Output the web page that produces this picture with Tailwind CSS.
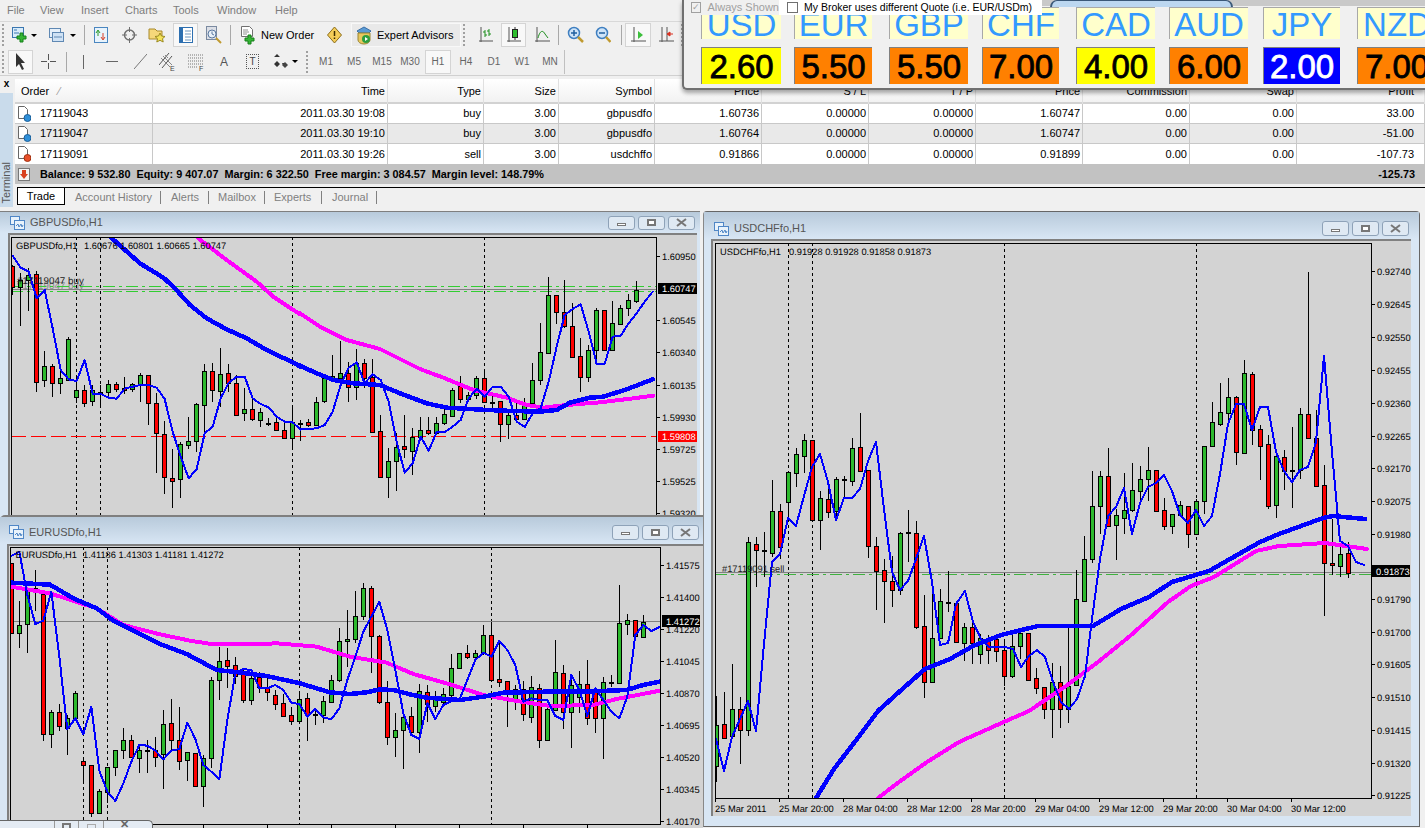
<!DOCTYPE html>
<html lang="en">

<head>
  <meta charset="UTF-8">
  <title>MetaTrader 4</title>
  <script src="https://cdn.jsdelivr.net/npm/@tailwindcss/browser@4"></script>
</head>

<body class="relative w-[1425px] h-[828px] overflow-hidden bg-[#f0f0f0] font-['Liberation_Sans',sans-serif] text-[11px] text-black">

  <!-- Menu -->
  <div class="flex items-center h-[21px] text-[#7d7d7d] text-[11px]">
    <span class="ml-[7px] w-[33px]">File</span>
    <span class="w-[41px]">View</span>
    <span class="w-[44px]">Insert</span>
    <span class="w-[48px]">Charts</span>
    <span class="w-[44px]">Tools</span>
    <span class="w-[58px]">Window</span>
    <span>Help</span>
  </div>

  <!-- Toolbar 1 -->
  <div class="flex items-center h-[27px] border-t border-[#d8d8d8]">
    <div class="ml-[2px] w-[2px] h-[22px] border-l-2 border-dotted border-[#a0a0a0]"></div>
    <svg class="ml-[7px] shrink-0" width="16" height="18" viewBox="0 0 16 18"><rect x="1.500" y="1.500" width="11" height="10" fill="#d8ecfa" stroke="#3a76b0"/><path d="M3 4h3M3 7h5" stroke="#3a76b0"/><path d="M9 7h3v3h3v3h-3v3H9v-3H6v-3h3z" fill="#35b535" stroke="#17801a"/></svg>
    <div class="ml-[4px] w-0 h-0 border-x-[3px] border-x-transparent border-t-[3px] border-t-black"></div>
    <svg class="ml-[11px] shrink-0" width="17" height="18" viewBox="0 0 17 18"><rect x="1.500" y="2.500" width="11" height="9" fill="#e6f0fa" stroke="#5f88b3"/><rect x="4.500" y="6.500" width="11" height="9" fill="#cfe2f5" stroke="#5f88b3"/><path d="M6 11h8" stroke="#5f88b3"/></svg>
    <div class="ml-[5px] w-0 h-0 border-x-[3px] border-x-transparent border-t-[3px] border-t-black"></div>
    <div class="ml-[8px] w-px h-[20px] bg-[#a8a8a8]"></div>
    <svg class="ml-[8px] shrink-0" width="16" height="18" viewBox="0 0 16 18"><rect x="1.500" y="1.500" width="13" height="15" fill="#e8f3fc" stroke="#4a86c0"/><path d="M5 10V5M3 7l2-3 2 3" stroke="#2a9a2a" fill="none"/><path d="M10 7v6M8 11l2 3 2-3" stroke="#d8402a" fill="none"/></svg>
    <svg class="ml-[13px] shrink-0" width="15" height="18" viewBox="0 0 15 18"><circle cx="7.500" cy="9" r="5" fill="none" stroke="#6f6f6f" stroke-width="1.500"/><path d="M7.500 1v5M7.500 12v5M0 9h5M10 9h5" stroke="#6f6f6f"/></svg>
    <svg class="ml-[11px] shrink-0" width="18" height="18" viewBox="0 0 18 18"><path d="M1 3h6l2 2h5v8H1z" fill="#f5d77a" stroke="#a88a2c"/><path d="M12 7l1.500 3 3.500.5-2.500 2.200.7 3.300-3.200-1.700-3.200 1.700.7-3.300L7 10.500l3.500-.5z" fill="#f4e25a" stroke="#9a8a20"/></svg>
    <div class="ml-[7px] flex justify-center items-center w-[25px] h-[24px] bg-[#f8f8f8] border border-[#d4d4d4]">
      <svg width="16" height="18" viewBox="0 0 16 18"><rect x="1.500" y="1.500" width="13" height="15" fill="#fff" stroke="#2d6fb0"/><rect x="2" y="2" width="3" height="14" fill="#2d6fb0"/><path d="M7 5h6M7 8h6M7 11h6M7 14h6" stroke="#6f97bf"/></svg>
    </div>
    <svg class="ml-[7px] shrink-0" width="18" height="20" viewBox="0 0 18 20"><rect x="1.500" y="1.500" width="10" height="13" fill="#dcdfe6" stroke="#7b8aa0"/><circle cx="7" cy="9" r="4" fill="#e8f0f8" stroke="#5a78a0"/><path d="M7 6.500V9l2 1" stroke="#5a78a0" fill="none"/><path d="M11 13l5 5" stroke="#c09a30" stroke-width="2"/></svg>
    <div class="ml-[7px] w-px h-[20px] bg-[#a8a8a8]"></div>
    <svg class="ml-[9px] shrink-0" width="16" height="20" viewBox="0 0 16 20"><path d="M1.500 1.500h8l3 3v7h-11z" fill="#fff" stroke="#707070"/><path d="M3 5h5M3 7h6M3 9h4" stroke="#909090"/><path d="M8 10h3v3h3v3h-3v3H8v-3H5v-3h3z" fill="#35b535" stroke="#17801a"/></svg>
    <span class="ml-[5px] w-[56px] text-[11px]">New Order</span>
    <svg class="ml-[10px] shrink-0" width="15" height="18" viewBox="0 0 15 18"><path d="M7.500 1l7 8-7 8-7-8z" fill="#f5cd58" stroke="#8a6d1c"/><path d="M7.500 5v5M7.500 11.500v1.500" stroke="#3c2c00" stroke-width="1.500"/></svg>
    <div class="ml-[9px] flex items-center w-[110px] h-[24px] bg-[#e9e9e9] border border-[#f8f8f8]">
      <svg class="ml-[3px] shrink-0" width="18" height="20" viewBox="0 0 18 20"><path d="M2 6l7-4 7 4-2 2H4z" fill="#5b9bd5" stroke="#3a6ea5"/><path d="M3 8h12v7a6 4 0 0 1-12 0z" fill="#e8c860" stroke="#9a8430"/><circle cx="11" cy="14" r="4" fill="#2e9e3e"/><path d="M10 12l3 2-3 2z" fill="#fff"/></svg>
      <span class="ml-[4px] text-[11px] whitespace-nowrap">Expert Advisors</span>
    </div>
    <div class="ml-[2px] w-[2px] h-[22px] border-l-2 border-dotted border-[#a0a0a0]"></div>
    <svg class="ml-[14px] shrink-0" width="14" height="18" viewBox="0 0 14 18"><path d="M2 1v15M0 15h14" stroke="#555" fill="none"/><path d="M6 4v7M4 6h2M6 9h2M10 3v7M8 5h2M10 8h2" stroke="#1f8f1f" fill="none"/></svg>
    <div class="ml-[8px] flex justify-center items-center w-[25px] h-[24px] bg-[#f8f8f8] border border-[#d4d4d4]">
      <svg width="14" height="18" viewBox="0 0 14 18"><path d="M2 1v15M0 15h14" stroke="#555" fill="none"/><path d="M8 1v13" stroke="#333"/><rect x="5.500" y="3.500" width="5" height="8" fill="#2fbf2f" stroke="#222"/></svg>
    </div>
    <svg class="ml-[9px] shrink-0" width="15" height="18" viewBox="0 0 15 18"><path d="M2 1v15M0 15h15" stroke="#555" fill="none"/><path d="M3 12c2-8 5-8 7-4l3 4" stroke="#1f8f1f" fill="none"/></svg>
    <div class="ml-[8px] w-px h-[20px] bg-[#a8a8a8]"></div>
    <svg class="ml-[8px] shrink-0" width="17" height="18" viewBox="0 0 17 18"><circle cx="7" cy="7" r="5.500" fill="#cfe4f8" stroke="#3f7fc0" stroke-width="1.500"/><path d="M4 7h6M7 4v6" stroke="#1f5f9f" stroke-width="1.500"/><path d="M11 11l5 5" stroke="#c09a30" stroke-width="2.500"/></svg>
    <svg class="ml-[11px] shrink-0" width="16" height="18" viewBox="0 0 16 18"><circle cx="7" cy="7" r="5.500" fill="#cfe4f8" stroke="#3f7fc0" stroke-width="1.500"/><path d="M4 7h6" stroke="#1f5f9f" stroke-width="1.500"/><path d="M11 11l4.500 5" stroke="#c09a30" stroke-width="2.500"/></svg>
    <div class="ml-[10px] w-px h-[20px] bg-[#a8a8a8]"></div>
    <div class="ml-[3px] flex justify-center items-center w-[26px] h-[24px] bg-[#f8f8f8] border border-[#d4d4d4]">
      <svg width="15" height="18" viewBox="0 0 15 18"><path d="M3 1v15M0 15h15" stroke="#555" fill="none"/><path d="M7 5l5 4-5 4z" fill="#3cbf3c"/></svg>
    </div>
    <svg class="ml-[8px] shrink-0" width="15" height="18" viewBox="0 0 15 18"><path d="M3 1v15M0 15h15M8 1v14" stroke="#555" fill="none"/><path d="M14 8l-5 0M11 6l-3 2 3 2z" fill="#d83020" stroke="#d83020"/></svg>
    <div class="ml-[7px] w-[2px] h-[22px] border-l-2 border-dotted border-[#a0a0a0]"></div>
  </div>

  <!-- Toolbar 2 -->
  <div class="flex items-center h-[28px] border-b border-[#d0d0d0]">
    <div class="ml-[2px] w-[2px] h-[22px] border-l-2 border-dotted border-[#a0a0a0]"></div>
    <div class="ml-[4px] flex justify-center items-center w-[25px] h-[24px] bg-[#f8f8f8] border border-[#d4d4d4]">
      <svg width="11" height="17" viewBox="0 0 11 17"><path d="M1 0v14l3-3 3 6 2-1-3-6h4z" fill="#333"/></svg>
    </div>
    <svg class="ml-[8px] shrink-0" width="15" height="15" viewBox="0 0 15 15"><path d="M7.500 0v6M7.500 9v6M0 7.500h6M9 7.500h6" stroke="#555"/></svg>
    <div class="ml-[10px] w-px h-[20px] bg-[#a8a8a8]"></div>
    <div class="ml-[16px] w-px h-[14px] bg-[#666]"></div>
    <div class="ml-[22px] w-[12px] h-px bg-[#666]"></div>
    <svg class="ml-[16px] shrink-0" width="13" height="15" viewBox="0 0 13 15"><path d="M0 15L13 0" stroke="#777"/></svg>
    <svg class="ml-[12px] shrink-0" width="17" height="20" viewBox="0 0 17 20"><path d="M0 13L10 1M3 16L13 4" stroke="#555"/><path d="M2 6l9 9M4 4l9 9M6 3l3 3" stroke="#888"/><text x="11" y="19" font-size="7" fill="#444">E</text></svg>
    <svg class="ml-[12px] shrink-0" width="16" height="20" viewBox="0 0 16 20"><path d="M0 3h15M0 6h15M0 9h15M0 12h15M0 15h10" stroke="#777" stroke-dasharray="1 1"/><text x="11" y="19" font-size="7" fill="#444">F</text></svg>
    <span class="ml-[16px] w-[8px] text-[12px] text-[#555]">A</span>
    <div class="ml-[18px] flex justify-center items-center w-[13px] h-[15px] border border-dotted border-[#555] text-[10px] text-[#444]">T</div>
    <svg class="ml-[14px] shrink-0" width="16" height="18" viewBox="0 0 16 18"><path d="M1 4l3-3 3 3zM9 10l3-0 -1.500 3zM4 8l3 3-3 3-3-3z" fill="#333"/><path d="M9 12l3 3 3-3-3-3z" fill="#444"/></svg>
    <div class="ml-[3px] w-0 h-0 border-x-[3px] border-x-transparent border-t-[3px] border-t-black"></div>
    <div class="ml-[8px] w-[2px] h-[22px] border-l-2 border-dotted border-[#a0a0a0]"></div>
    <div class="ml-[4px] flex items-center text-[10px] text-[#666] text-center">
      <span class="w-[28px]">M1</span>
      <span class="w-[28px]">M5</span>
      <span class="w-[28px]">M15</span>
      <span class="w-[28px]">M30</span>
      <span class="flex justify-center items-center w-[26px] h-[24px] mx-px bg-[#f8f8f8] border border-[#d4d4d4]">H1</span>
      <span class="w-[28px]">H4</span>
      <span class="w-[28px]">D1</span>
      <span class="w-[28px]">W1</span>
      <span class="w-[28px]">MN</span>
    </div>
    <div class="w-px h-[24px] bg-[#c0c0c0]"></div>
  </div>

  <!-- Terminal -->
  <div class="flex h-[131px] pt-[3px]">
    <div class="relative w-[13px] shrink-0 bg-[#c9dbeb]">
      <div class="absolute left-0 top-[-3px] w-[13px] h-[17px] bg-[#f0f0f0] text-center font-bold text-[10px]">x</div>
      <div class="absolute left-0 bottom-[3px] w-[13px] flex justify-center">
        <span class="[writing-mode:vertical-rl] rotate-180 text-[11px] text-[#555]">Terminal</span>
      </div>
    </div>
    <div class="flex-1 ml-[2px]">
      <div class="grid grid-cols-[138px_235px_96px_75px_96px_107px_107px_107px_107px_107px_107px_128px] h-[25px] bg-linear-to-b from-white to-[#f2f2f2] border-b-2 border-[#d2d2d2] items-center text-right [&>span]:h-full [&>span]:leading-[25px] [&>span]:pr-[2px] [&>span]:border-r [&>span]:border-[#e0e0e0]">
        <span class="!text-left pl-[6px]">Order &nbsp; <span class="text-[#999]">⁄</span></span>
        <span>Time</span><span>Type</span><span>Size</span><span>Symbol</span><span>Price</span><span>S / L</span><span>T / P</span><span>Price</span><span>Commission</span><span>Swap</span><span class="!pr-[10px]">Profit</span>
      </div>
      <div class="grid grid-cols-[138px_235px_96px_75px_96px_107px_107px_107px_107px_107px_107px_128px] h-[20px] bg-white border-b border-[#c8c8c8] items-center text-right [&>span]:h-full [&>span]:leading-[19px] [&>span]:pr-[2px] [&>span]:border-r [&>span]:border-[#c8c8c8]">
        <span class="!flex items-center !text-left pl-[3px]"><svg class="mr-[9px]" width="13" height="16" viewBox="0 0 13 16"><path d="M.5.500h6l3 3v9h-9z" fill="#fff" stroke="#666"/><circle cx="9.500" cy="12" r="3.500" fill="#2f8fd8" stroke="#1a5f9a"/></svg>17119043</span>
        <span>2011.03.30 19:08</span><span>buy</span><span>3.00</span><span>gbpusdfo</span><span>1.60736</span><span>0.00000</span><span>0.00000</span><span>1.60747</span><span>0.00</span><span>0.00</span><span class="!pr-[10px]">33.00</span>
      </div>
      <div class="grid grid-cols-[138px_235px_96px_75px_96px_107px_107px_107px_107px_107px_107px_128px] h-[20px] bg-[#e9e9e9] border-b border-[#c8c8c8] items-center text-right [&>span]:h-full [&>span]:leading-[19px] [&>span]:pr-[2px] [&>span]:border-r [&>span]:border-[#c8c8c8]">
        <span class="!flex items-center !text-left pl-[3px]"><svg class="mr-[9px]" width="13" height="16" viewBox="0 0 13 16"><path d="M.5.500h6l3 3v9h-9z" fill="#fff" stroke="#666"/><circle cx="9.500" cy="12" r="3.500" fill="#2f8fd8" stroke="#1a5f9a"/></svg>17119047</span>
        <span>2011.03.30 19:10</span><span>buy</span><span>3.00</span><span>gbpusdfo</span><span>1.60764</span><span>0.00000</span><span>0.00000</span><span>1.60747</span><span>0.00</span><span>0.00</span><span class="!pr-[10px]">-51.00</span>
      </div>
      <div class="grid grid-cols-[138px_235px_96px_75px_96px_107px_107px_107px_107px_107px_107px_128px] h-[20px] bg-white items-center text-right [&>span]:h-full [&>span]:leading-[20px] [&>span]:pr-[2px] [&>span]:border-r [&>span]:border-[#c8c8c8]">
        <span class="!flex items-center !text-left pl-[3px]"><svg class="mr-[9px]" width="13" height="16" viewBox="0 0 13 16"><path d="M.5.500h6l3 3v9h-9z" fill="#fff" stroke="#666"/><circle cx="9.500" cy="12" r="3.500" fill="#e8502a" stroke="#a03010"/></svg>17119091</span>
        <span>2011.03.30 19:26</span><span>sell</span><span>3.00</span><span>usdchffo</span><span>0.91866</span><span>0.00000</span><span>0.00000</span><span>0.91899</span><span>0.00</span><span>0.00</span><span class="!pr-[10px]">-107.73</span>
      </div>
      <div class="flex items-center h-[20px] bg-[#c2c2c2] font-bold text-[10.85px]">
        <div class="ml-[3px] flex justify-center items-center w-[12px] h-[13px] bg-[#f4f4f4] border border-[#777]">
          <svg width="8" height="9" viewBox="0 0 8 9"><path d="M2 0h4v4h2L4 9 0 4h2z" fill="#d8401f"/></svg>
        </div>
        <span class="ml-[10px] whitespace-pre">Balance: 9 532.80  Equity: 9 407.07  Margin: 6 322.50  Free margin: 3 084.57  Margin level: 148.79%</span>
        <span class="ml-auto mr-[10px]">-125.73</span>
      </div>
      <!-- Tabs -->
      <div class="flex h-[22px] text-[11px] text-[#808080]">
        <div class="ml-[2px] mt-[3px] flex justify-center items-center w-[48px] h-[18px] bg-white border border-black text-black shrink-0">Trade</div>
        <div class="flex-1 flex items-center mt-[3px] h-[19px] border-t border-black pt-[1px]">
          <span class="ml-[10px] w-[86px] border-r border-[#808080] leading-[13px]">Account History</span>
          <span class="pl-[10px] w-[48px] border-r border-[#808080] leading-[13px]">Alerts</span>
          <span class="pl-[9px] w-[56px] border-r border-[#808080] leading-[13px]">Mailbox</span>
          <span class="pl-[9px] w-[57px] border-r border-[#808080] leading-[13px]">Experts</span>
          <span class="pl-[10px] w-[55px] border-r border-[#808080] leading-[13px]">Journal</span>
        </div>
      </div>
    </div>
  </div>

  <!-- GBPUSD window -->
  <div class="absolute z-10 left-0 top-[211px] w-[700px] h-[320px] bg-[#d8e6f4] border-t border-[#7f7f7f]">
    <div class="flex items-center h-[21px] bg-linear-to-b from-[#b8cadb] to-[#d8e6f4]">
      <svg class="ml-[10px] shrink-0" width="15" height="14" viewBox="0 0 15 14"><rect x=".5" y=".5" width="9" height="8" fill="#e8f2fb" stroke="#4f86c6"/><rect x="4.500" y="4.500" width="10" height="9" fill="#e8f2fb" stroke="#4f86c6"/><path d="M6 10l2-2 1 3 2-3 1 3 1-2" fill="none" stroke="#4f86c6"/></svg>
      <span class="ml-[5px] text-[#555] text-[11px]">GBPUSDfo,H1</span>
      <div class="ml-auto mr-[5px] flex gap-[3px]">
        <div class="flex justify-center items-center w-[27px] h-[14px] rounded-[3px] border border-[#8ea2b8] bg-[#dfe9f3]"><div class="w-[9px] h-[3px] mt-[3px] bg-white border border-[#777]"></div></div>
        <div class="flex justify-center items-center w-[27px] h-[14px] rounded-[3px] border border-[#8ea2b8] bg-[#dfe9f3]"><div class="w-[9px] h-[7px] bg-white border-2 border-[#777]"></div></div>
        <div class="flex justify-center items-center w-[27px] h-[14px] rounded-[3px] border border-[#8ea2b8] bg-[#dfe9f3]"><svg width="11" height="9" viewBox="0 0 11 9"><path d="M1 1l9 7M10 1L1 8" stroke="#777" stroke-width="2"/></svg></div>
      </div>
    </div>
    <div id="gbp" class="ml-[8px] w-[689px] h-[298px]"></div>
  </div>

  <!-- USDCHF window -->
  <div class="absolute z-10 left-[703px] top-[211px] w-[717px] h-[616px] bg-[#d8e6f4] border border-[#666] rounded-t-[4px] border-l-[#888]">
    <div class="flex items-center h-[27px] pt-[6px] bg-linear-to-b from-[#b8cadb] to-[#d8e6f4]">
      <svg class="ml-[10px] shrink-0" width="15" height="14" viewBox="0 0 15 14"><rect x=".5" y=".5" width="9" height="8" fill="#e8f2fb" stroke="#4f86c6"/><rect x="4.500" y="4.500" width="10" height="9" fill="#e8f2fb" stroke="#4f86c6"/><path d="M6 10l2-2 1 3 2-3 1 3 1-2" fill="none" stroke="#4f86c6"/></svg>
      <span class="ml-[5px] text-[#555] text-[11px]">USDCHFfo,H1</span>
      <div class="ml-auto mr-[10px] flex gap-[3px]">
        <div class="flex justify-center items-center w-[27px] h-[15px] rounded-[3px] border border-[#8ea2b8] bg-[#dfe9f3]"><div class="w-[9px] h-[3px] mt-[3px] bg-white border border-[#777]"></div></div>
        <div class="flex justify-center items-center w-[27px] h-[15px] rounded-[3px] border border-[#8ea2b8] bg-[#dfe9f3]"><div class="w-[9px] h-[7px] bg-white border-2 border-[#777]"></div></div>
        <div class="flex justify-center items-center w-[27px] h-[15px] rounded-[3px] border border-[#8ea2b8] bg-[#dfe9f3]"><svg width="11" height="9" viewBox="0 0 11 9"><path d="M1 1l9 7M10 1L1 8" stroke="#777" stroke-width="2"/></svg></div>
      </div>
    </div>
    <div id="chf" class="ml-[7px] w-[700px] h-[577px]"></div>
  </div>

  <!-- EURUSD window -->
  <div class="absolute z-20 left-0 top-[515px] w-[703px] h-[320px] bg-[#d8e6f4] border-t-2 border-[#7f7f7f] rounded-tl-[5px]">
    <div class="flex items-center h-[27px] pt-[3px] bg-linear-to-b from-[#b8cadb] to-[#d8e6f4]">
      <svg class="ml-[9px] shrink-0" width="15" height="14" viewBox="0 0 15 14"><rect x=".5" y=".5" width="9" height="8" fill="#e8f2fb" stroke="#4f86c6"/><rect x="4.500" y="4.500" width="10" height="9" fill="#e8f2fb" stroke="#4f86c6"/><path d="M6 10l2-2 1 3 2-3 1 3 1-2" fill="none" stroke="#4f86c6"/></svg>
      <span class="ml-[5px] text-[#555] text-[11px]">EURUSDfo,H1</span>
      <div class="ml-auto mr-[4px] flex gap-[3px]">
        <div class="flex justify-center items-center w-[27px] h-[15px] rounded-[3px] border border-[#8ea2b8] bg-[#dfe9f3]"><div class="w-[9px] h-[3px] mt-[3px] bg-white border border-[#777]"></div></div>
        <div class="flex justify-center items-center w-[27px] h-[15px] rounded-[3px] border border-[#8ea2b8] bg-[#dfe9f3]"><div class="w-[9px] h-[7px] bg-white border-2 border-[#777]"></div></div>
        <div class="flex justify-center items-center w-[27px] h-[15px] rounded-[3px] border border-[#8ea2b8] bg-[#dfe9f3]"><svg width="11" height="9" viewBox="0 0 11 9"><path d="M1 1l9 7M10 1L1 8" stroke="#777" stroke-width="2"/></svg></div>
      </div>
    </div>
    <div id="eur" class="ml-[7px] w-[696px] h-[284px]"></div>
  </div>

  <!-- Minimized window -->
  <div class="absolute z-30 left-0 top-[820px] flex w-[153px] h-[12px] pl-[54px] bg-[#e4ebf3] border-t border-r border-[#666] rounded-tr-[5px]">
    <div class="flex justify-center w-[25px] border-x border-[#999]"><div class="w-[9px] h-[7px] mt-[2px] border-2 border-[#777]"></div></div>
    <div class="flex justify-center w-[25px] border-r border-[#999]"><div class="w-[9px] h-[7px] mt-[3px] border border-[#aaa]"></div></div>
    <div class="flex justify-center w-[41px] text-[11px] leading-[7px] font-bold text-[#666]">✕</div>
  </div>

  <!-- Currency meter window -->
  <div class="absolute z-40 left-[682px] top-0 w-[743px] h-[90px] bg-[#f0f0f0] border-l-2 border-b-2 border-[#707070] rounded-bl-[5px] shadow-[0_3px_4px_rgba(0,0,0,0.35)] overflow-hidden">
    <div class="absolute left-0 top-0 w-full h-[6px] bg-[#c9c9c9]"></div>
    <div class="absolute left-[366px] top-0 w-[183px] h-[7px] bg-[#bcd7f0] border-t border-x-2 border-[#3a5878] rounded-t-[8px]"></div>
    <div class="absolute left-[17px] top-[7px] flex gap-[13px] w-[740px] [&>div]:shrink-0">
      <div class="flex flex-col gap-[8px] w-[80px]"><div class="h-[32px] bg-[#ffffcc] border-t border-l border-[#a8a8a8] text-center text-[#3399ff] text-[33px] leading-[33px] overflow-hidden">USD</div><div class="h-[37px] bg-[#ffff00] border-t border-l border-[#808080] text-center text-[33px] leading-[37px] [-webkit-text-stroke:0.8px_currentColor]">2.60</div></div>
      <div class="flex flex-col gap-[8px] w-[78px]"><div class="h-[32px] bg-[#ffffcc] border-t border-l border-[#a8a8a8] text-center text-[#3399ff] text-[33px] leading-[33px] overflow-hidden">EUR</div><div class="h-[37px] bg-[#ff8000] border-t border-l border-[#808080] text-center text-[33px] leading-[37px] [-webkit-text-stroke:0.8px_currentColor]">5.50</div></div>
      <div class="flex flex-col gap-[8px] w-[79px] ml-[4px]"><div class="h-[32px] bg-[#ffffcc] border-t border-l border-[#a8a8a8] text-center text-[#3399ff] text-[33px] leading-[33px] overflow-hidden">GBP</div><div class="h-[37px] bg-[#ff8000] border-t border-l border-[#808080] text-center text-[33px] leading-[37px] [-webkit-text-stroke:0.8px_currentColor]">5.50</div></div>
      <div class="flex flex-col gap-[8px] w-[77px] ml-px"><div class="h-[32px] bg-[#ffffcc] border-t border-l border-[#a8a8a8] text-center text-[#3399ff] text-[33px] leading-[33px] overflow-hidden">CHF</div><div class="h-[37px] bg-[#ff8000] border-t border-l border-[#808080] text-center text-[33px] leading-[37px] [-webkit-text-stroke:0.8px_currentColor]">7.00</div></div>
      <div class="flex flex-col gap-[8px] w-[79px] ml-[4px]"><div class="h-[32px] bg-[#ffffcc] border-t border-l border-[#a8a8a8] text-center text-[#3399ff] text-[33px] leading-[33px] overflow-hidden">CAD</div><div class="h-[37px] bg-[#ffff00] border-t border-l border-[#808080] text-center text-[33px] leading-[37px] [-webkit-text-stroke:0.8px_currentColor]">4.00</div></div>
      <div class="flex flex-col gap-[8px] w-[79px] ml-px"><div class="h-[32px] bg-[#ffffcc] border-t border-l border-[#a8a8a8] text-center text-[#3399ff] text-[33px] leading-[33px] overflow-hidden">AUD</div><div class="h-[37px] bg-[#ff8000] border-t border-l border-[#808080] text-center text-[33px] leading-[37px] [-webkit-text-stroke:0.8px_currentColor]">6.00</div></div>
      <div class="flex flex-col gap-[8px] w-[77px] ml-[2px]"><div class="h-[32px] bg-[#ffffcc] border-t border-l border-[#a8a8a8] text-center text-[#3399ff] text-[33px] leading-[33px] overflow-hidden">JPY</div><div class="h-[37px] bg-[#0000ff] border-t border-l border-[#808080] text-center text-white text-[33px] leading-[37px] [-webkit-text-stroke:0.8px_currentColor]">2.00</div></div>
      <div class="flex flex-col gap-[8px] w-[79px] ml-[4px]"><div class="h-[32px] bg-[#ffffcc] border-t border-l border-[#a8a8a8] text-center text-[#3399ff] text-[33px] leading-[33px] overflow-hidden">NZD</div><div class="h-[37px] bg-[#ff8000] border-t border-l border-[#808080] text-center text-[33px] leading-[37px] [-webkit-text-stroke:0.8px_currentColor]">7.00</div></div>
    </div>
    <div class="absolute left-0 top-0 flex items-center h-[15px] w-[358px]">
      <div class="flex items-center h-[15px] w-[95px] pl-[7px] bg-[#f0f0f0] text-[#a0a0a0]">
        <span class="flex justify-center items-center w-[11px] h-[11px] border border-[#a0a0a0] text-[9px] leading-none">✓</span>
        <span class="ml-[6px] whitespace-nowrap">Always Shown</span>
      </div>
      <div class="flex items-center flex-1 h-[15px] pl-[8px] bg-white">
        <span class="w-[11px] h-[11px] bg-white border border-[#707070]"></span>
        <span class="ml-[6px] whitespace-nowrap text-[10.5px]">My Broker uses different Quote (i.e. EUR/USDm)</span>
      </div>
    </div>
  </div>

  <script>
    const GREEN = '#2db92d';

    // zoomed-crop coordinates back to page coordinates
    const z = (x0, y0, pts) => pts.map(p => [x0 + p[0] / 3, y0 + p[1] / 3]);

    const poly = (pts, color, w) =>
      `<polyline points="${pts.map(p => p.join(',')).join(' ')}" fill="none" stroke="${color}" stroke-width="${w}" stroke-linejoin="round" stroke-linecap="round"/>`;

    const hline = (x1, x2, y, color, dash) =>
      `<line x1="${x1}" x2="${x2}" y1="${y}" y2="${y}" stroke="${color}"${dash ? ` stroke-dasharray="${dash}"` : ''}/>`;

    const vline = (x, y1, y2) =>
      `<line x1="${x + .5}" x2="${x + .5}" y1="${y1}" y2="${y2}" stroke="#000" stroke-dasharray="3 3"/>`;

    const label = (x, y, s, fill = '#000', size = 9.3) =>
      `<text x="${x}" y="${y}" fill="${fill}" font-size="${size}" text-rendering="geometricPrecision">${s}</text>`;

    function candles(rows, x0) {
      return rows.map((r, i) => {
        const x = Math.floor(x0 + 8 * i);
        const [c, wt, bt, bb, wb] = r;
        const top = Math.round(bt), bot = Math.max(Math.round(bb), top + 1);
        return `<line x1="${x + .5}" x2="${x + .5}" y1="${Math.round(wt)}" y2="${Math.round(wb)}" stroke="#000"/>` +
          `<rect x="${x - 1.5}" y="${top + .5}" width="4" height="${bot - top}" fill="${c === 'g' ? GREEN : '#ff0000'}" stroke="#000"/>`;
      }).join('');
    }

    function draw(id, o) {
      const [vx, vy, vw, vh] = o.view;
      const [l, t, r, b] = o.plot;
      let s = `<svg width="${vw}" height="${vh}" viewBox="${vx} ${vy} ${vw} ${vh}" shape-rendering="crispEdges" class="block font-['Liberation_Sans',sans-serif]">`;
      s += `<defs><clipPath id="clip-${id}"><rect x="${l}" y="${t}" width="${r - l}" height="${b - t}"/></clipPath></defs>`;
      s += `<rect x="${vx}" y="${vy}" width="${vw}" height="${vh}" fill="#d3d3d3"/>`;
      s += `<path d="M${vx + 1} ${vy + vh}V${vy + 1}H${vx + vw}" fill="none" stroke="#808080" stroke-width="2"/>`;
      s += `<g clip-path="url(#clip-${id})">`;
      s += o.back;
      s += candles(o.rows, o.x0);
      s += poly(o.magenta, '#ff00ff', 4) + poly(o.thick, '#0000ff', 4.5) + poly(o.thin, '#0000ff', 2);
      s += o.front || '';
      s += '</g>';
      s += `<path d="M${l + .5} ${b}V${t + .5}H${r + .5}V${b + .5}H${l}" fill="none" stroke="#000"/>`;
      o.prices.forEach(p => {
        s += `<line x1="${r + 1}" x2="${r + 4}" y1="${p[1] + .5}" y2="${p[1] + .5}" stroke="#000"/>`;
        s += label(r + 6, p[1] + 3.5, p[0]);
      });
      s += o.over;
      s += '</svg>';
      document.getElementById(id).innerHTML = s;
    }

    // GBPUSD
    draw('gbp', {
      view: [8, 233, 689, 298],
      plot: [11, 237, 656, 560],
      x0: 12.67,
      rows: [
        ['r',265,266,287,295],['g',273,280,287,326],['g',268,275,280,311],['r',271,274,382,392],['g',351,366,380,387],['r',364,366,383,397],['g',370,378,383,394],['g',337,339,380,380],
        ['g',378,390,397,403],['r',385,390,403,407],['g',385,390,401,406],['g',385,392,392,408],['g',380,384,392,397],['r',382,384,389,392],['r',377,388,390,394],['g',383,384,389,392],
        ['g',373,375,385,402],['r',375,375,403,425],['r',393,403,433,473],['r',421,434,477,494],['r',449,478,481,508],['g',442,444,479,498],['g',417,441,445,449],['g',403,404,441,452],
        ['g',364,371,405,433],['r',363,371,390,402],['g',348,374,391,407],['r',364,373,383,392],['r',375,383,415,416],['g',388,409,413,421],['r',398,409,419,421],['g',408,412,420,427],
        ['g',418,423,423,426],['r',415,422,430,430],['r',420,430,438,438],['g',408,422,438,450],['g',420,423,423,441],['r',419,422,425,427],['g',397,402,425,425],['g',378,378,401,403],
        ['g',355,376,378,380],['g',341,373,378,385],['r',362,373,387,402],['g',349,363,387,400],['r',359,363,378,388],['r',359,377,432,432],['r',415,431,477,477],['g',448,461,477,498],
        ['g',433,447,461,491],['r',415,446,449,458],['g',428,437,451,475],['g',417,430,437,437],['r',417,430,433,435],['g',417,423,433,434],['g',405,414,423,425],['g',388,390,416,416],
        ['r',376,386,399,403],['g',392,395,399,400],['g',376,378,395,399],['r',369,378,402,402],['g',392,402,402,412],['r',402,401,424,442],['g',412,415,424,439],['r',403,415,419,420],
        ['g',398,405,419,420],['g',363,380,403,403],['g',323,352,380,385],['g',277,295,353,354],['r',295,295,312,324],['r',280,312,326,328],['r',303,326,357,358],['r',338,356,377,392],
        ['g',345,350,377,382],['g',308,310,350,365],['r',310,310,350,350],['g',301,323,350,350],['g',305,308,324,324],['g',294,300,308,316],['g',281,290,301,303]
      ],
      thin: [...z(0, 235, [[38,62],[62,98],[86,110],[110,190],[134,165],[158,280],[182,405],[206,433],[230,438],[254,375],[278,477],[302,477],[326,488],[350,491],[374,461],[398,455],[422,450],[446,450],[470,458],[494,492],[518,590],[542,665],[566,730],[590,702],[614,595],[638,575],[662,490],[686,443],[710,425],[734,425],[758,490],[782,507],[806,517],[830,545],[854,560],[878,562],[902,584]]),
        ...z(300, 215, [[2,643],[50,640],[74,630],[98,590],[122,510],[146,458],[170,442],[194,505],[218,478],[242,495],[266,560],[290,680],[314,773],[338,745],[362,665],[386,707],[410,652],[434,651],[458,635],[482,615],[506,550],[530,522],[554,545],[578,515],[602,515],[626,545],[650,620],[674,636],[698,595],[722,580],[746,500],[770,395],[794,300],[818,282],[842,268],[866,350],[890,447],[914,447],[938,365],[962,362],[986,325],[1010,295],[1034,260],[1058,230]])],
      thick: [...z(0, 235, [[330,5],[420,85],[490,128],[520,155],[570,210],[620,250],[680,283],[740,310],[800,345],[880,383],[900,394]]),
        ...z(300, 215, [[0,452],[50,475],[100,495],[160,505],[240,510],[300,535],[380,565],[440,578],[560,585],[640,588],[720,590],[770,585],[810,563],[870,548],[910,545],[980,523],[1058,493]])],
      magenta: [...z(0, 235, [[595,10],[680,75],[770,140],[820,185],[880,225],[900,238]]),
        ...z(300, 215, [[0,295],[60,335],[140,375],[240,402],[300,432],[360,462],[430,488],[520,525],[620,548],[680,570],[730,578],[800,570],[900,562],[1000,550],[1060,542]])],
      back: vline(76, 237, 560) + vline(100, 237, 560) + vline(292, 237, 560) + vline(484, 237, 560) +
        label(17, 288.5, '#17119047 buy', '#8a8a8a', 9.8) +
        hline(11, 656, 286.5, '#32cd32', '12 4 3 4') + hline(11, 656, 291.5, '#32cd32', '12 4 3 4') +
        hline(11, 656, 289.5, '#808080') + hline(11, 656, 436.5, '#ff0000', '15 5'),
      front: label(17, 284, '#17119047 buy', '#222', 9.8) +
        label(16, 249, 'GBPUSDfo,H1') + label(84, 249, '1.60676 1.60801 1.60665 1.60747'),
      prices: [['1.60950',256],['1.60545',320],['1.60340',352],['1.60135',385],['1.59930',417],['1.59725',449],['1.59525',481],['1.59320',513]],
      over: `<rect x="658" y="283" width="39" height="11" fill="#000"/>` + label(662, 292, '1.60747', '#fff') +
        `<rect x="658" y="431" width="39" height="11" fill="#ff0000"/>` + label(662, 440, '1.59808', '#fff')
    });

    // EURUSD
    const eurRows = [
      ['r',190,190,400,400],['g',303,374,398,443],['g',260,270,373,458],['g',210,265,267,333],['r',283,283,703,722],['g',630,637,703,745],['r',613,637,679,692],['g',645,655,683,765],
      ['g',573,580,653,655],['r',770,782,796,850],['r',796,796,940,950],['g',868,874,940,940],['g',802,802,875,908],['g',751,751,802,828],['g',685,721,751,778],['r',705,721,772,772],
      ['g',740,751,775,818],['g',720,750,752,818],['r',712,751,770,800],['g',630,673,761,866],['r',597,670,721,750],['r',621,721,784,810],['g',755,757,781,842],['r',760,760,857,862],
      ['g',765,775,857,920],['g',530,541,775,805],['g',440,484,539,600],['r',445,481,497,565],['r',472,496,527,552],['r',510,523,599,608],['g',510,535,601,615],['r',515,532,562,580],
      ['r',530,560,577,603],['r',570,586,613,630],['r',583,610,647,650],['r',620,646,664,675],['g',575,598,664,670],['r',580,595,645,722],['g',625,642,644,675],['g',588,604,646,670],
      ['g',525,541,605,608],['g',385,424,541,545],['g',330,418,424,500],['g',273,349,418,430],['g',250,265,349,360],['r',258,265,409,520],['r',405,409,607,613],['r',543,607,712,735],
      ['g',638,691,712,772],['g',650,652,691,808],['r',620,649,695,695],['g',552,574,697,760],['r',556,577,612,665],['g',573,589,617,635],['g',565,583,605,620],['g',463,505,584,590],
      ['g',458,460,505,505],['r',435,460,470,477],['g',450,460,470,475],['g',375,406,460,465],['r',366,406,539,540],['r',422,538,545,560],['r',543,544,580,680],['g',555,568,600,630],
      ['r',543,568,643,662],['g',528,562,650,668],['r',552,565,721,743],['g',620,628,721,723],['g',420,517,630,632],['r',495,520,635,686],['g',540,555,635,745],['g',513,553,590,640],
      ['r',480,553,655,675],['r',560,575,655,700],['g',530,547,655,778],['g',525,547,550,560],['g',255,370,550,552],['g',343,361,371,405],['r',361,361,408,410],['g',345,365,412,415]
    ].map(r => [r[0], ...r.slice(1).map(v => 500 + v / 3)]);

    draw('eur', {
      view: [7, 544, 696, 284],
      plot: [10, 547, 660, 824],
      x0: 11.33,
      rows: eurRows,
      thin: [...z(0, 500, [[34,168],[58,155],[82,285],[106,372],[130,362],[154,275],[178,470],[202,688],[226,655],[250,703],[274,620],[298,812],[322,875],[346,903],[370,850],[394,785],[418,735],[442,737],[466,752],[490,778],[514,752],[538,747],[562,668],[586,717],[610,795],[634,815],[658,838],[682,660],[706,520],[730,507],[754,510],[778,565],[802,565],[826,555],[850,570],[874,608],[898,612],[922,650],[946,627],[970,652],[994,658],[1018,625],[1042,540]]),
        ...z(350, 500, [[16,470],[40,395],[64,350],[88,305],[112,390],[136,510],[160,640],[184,705],[208,717],[232,610],[256,657],[280,615],[304,603],[328,600],[352,540],[376,480],[400,458],[424,470],[448,423],[472,450],[496,495],[520,605],[544,595],[568,600],[592,600],[616,648],[640,660],[664,525],[688,570],[712,648],[736,565],[760,600],[784,635],[808,655],[832,590],[856,405],[880,375],[904,393],[930,380]])],
      thick: [...z(0, 500, [[34,248],[150,254],[220,295],[290,325],[340,362],[480,432],[560,462],[650,510],[700,515],[800,528],[900,550],[990,577],[1050,582]]),
        ...z(350, 500, [[50,577],[90,568],[130,570],[180,583],[230,593],[330,600],[400,590],[460,578],[590,575],[700,575],[830,570],[880,555],[930,545]])],
      magenta: [...z(0, 500, [[34,260],[150,280],[290,325],[370,375],[480,403],[570,422],[640,433],[750,433],[830,430],[950,440],[1050,470]]),
        ...z(350, 500, [[110,488],[190,522],[300,553],[400,585],[500,603],[600,618],[730,615],[800,597],[930,572]])],
      back: vline(83, 547, 824) + vline(107, 547, 824) + vline(299, 547, 824) + vline(491, 547, 824) + hline(10, 660, 621.5, '#808080'),
      front: label(15.5, 558, 'EURUSDfo,H1') + label(83, 558, '1.41186 1.41303 1.41181 1.41272'),
      prices: [['1.41575',565],['1.41400',597],['1.41220',629],['1.41045',661],['1.40870',693],['1.40695',725],['1.40520',757],['1.40345',789],['1.40170',821]],
      over: [11, 75, 139, 203, 267, 331, 395, 459, 523, 587].map(x => `<line x1="${x + .5}" x2="${x + .5}" y1="824" y2="828" stroke="#000"/>`).join('') +
        `<rect x="662" y="615" width="38" height="12" fill="#000"/>` + label(666, 624.5, '1.41272', '#fff')
    });

    // USDCHF
    draw('chf', {
      view: [711, 240, 700, 577],
      plot: [715, 244, 1371, 799],
      x0: 716.33,
      rows: [
        ['g',697,726,767,783],['r',693,725,739,740],['g',665,710,737,737],['r',698,710,731,765],['g',538,543,731,737],['r',538,545,551,588],['g',533,551,552,578],['g',481,512,554,558],
        ['r',505,512,548,560],['g',473,473,503,520],['g',449,455,474,488],['g',435,441,457,474],['r',441,441,521,522],['g',492,499,521,551],['r',486,500,513,519],['g',478,480,512,517],
        ['g',477,480,481,500],['g',439,449,482,487],['r',414,448,472,472],['r',471,471,547,559],['r',538,547,572,611],['r',560,571,582,624],['r',557,582,591,608],['g',533,534,591,596],
        ['g',511,533,534,563],['r',522,534,628,630],['r',596,627,683,699],['g',590,639,683,683],['g',590,602,639,640],['g',572,603,604,613],['r',604,604,643,643],['g',624,628,644,662],
        ['r',624,628,644,665],['g',635,639,655,665],['r',636,639,651,665],['r',636,640,652,663],['r',640,651,677,687],['g',635,647,677,679],['g',634,634,647,660],['r',634,634,681,682],
        ['r',669,679,689,695],['r',688,688,710,720],['g',664,683,710,739],['r',667,683,710,729],['g',627,687,710,724],['g',571,600,686,687],['g',537,560,602,603],['g',472,507,560,564],
        ['g',472,477,507,535],['r',449,477,527,528],['g',510,516,526,561],['g',474,511,519,535],['g',464,491,511,513],['g',467,480,492,502],['g',448,471,480,502],['r',471,471,512,513],
        ['r',499,511,527,531],['g',515,515,527,535],['g',502,506,516,518],['r',507,507,535,549],['g',500,502,535,535],['g',447,447,502,515],['g',403,423,447,447],['g',384,413,425,427],
        ['g',379,398,414,425],['r',397,398,453,466],['g',361,374,454,454],['r',373,375,431,446],['r',426,430,447,481],['r',436,445,507,510],['g',453,457,506,519],['r',451,458,472,491],
        ['g',428,471,472,509],['g',409,415,471,480],['r',273,415,439,439],['r',411,439,487,488],['r',466,486,564,617],['r',520,564,566,576],['g',548,555,567,578],['r',543,554,574,579]
      ],
      thin: [[716,740],[724,772],[732,738],[740,720],[748,702],[756,732],[764,645],[772,563],[780,555],[788,519],[796,527],[804,497],[812,468],[820,455],[828,483],[836,521],[844,499],[852,499],[860,490],[868,462],[876,443],[884,510],[892,573],[900,591],[908,582],[916,560],[924,537],[932,583],[940,646],[948,644],[956,605],[965,592],[973,623],[981,640],[989,648],[1005,648],[1013,650],[1021,668],[1029,657],[1037,651],[1045,658],[1053,683],[1061,703],[1069,710],[1077,700],[1085,677],[1092,620],[1100,560],[1108,517],[1116,508],[1124,489],[1132,535],[1140,504],[1148,488],[1156,484],[1164,476],[1172,492],[1180,516],[1188,524],[1196,511],[1204,527],[1212,517],[1220,475],[1228,425],[1236,405],[1244,405],[1252,431],[1260,408],[1268,408],[1276,453],[1284,472],[1292,483],[1300,471],[1308,468],[1316,443],[1324,357],[1332,453],[1340,542],[1348,547],[1356,563],[1364,566]],
      thick: [[816,799],[834,770],[857,740],[878,712],[899,693],[925,670],[950,660],[973,647],[1001,636],[1038,627],[1093,627],[1121,610],[1149,598],[1172,583],[1209,572],[1260,543],[1279,535],[1323,519],[1333,517],[1365,520]],
      magenta: [[878,799],[899,783],[927,763],[959,743],[1006,722],[1029,712],[1066,687],[1098,663],[1130,637],[1168,603],[1191,587],[1214,578],[1256,552],[1279,547],[1325,544],[1367,550]],
      back: vline(788, 244, 799) + vline(812, 244, 799) + vline(1004, 244, 799) + vline(1196, 244, 799) +
        hline(715, 1371, 573.5, '#808080') + hline(715, 1371, 575.5, '#3fb13f', '12 4 3 4'),
      front: label(722, 573, '#17119091 sell', '#222') + label(720, 256, 'USDCHFfo,H1') + label(789, 256, '0.91928 0.91928 0.91858 0.91873'),
      prices: [['0.92740',272],['0.92645',305],['0.92550',338],['0.92455',371],['0.92360',404],['0.92265',437],['0.92170',469],['0.92075',502],['0.91980',535],['0.91790',600],['0.91700',633],['0.91605',665],['0.91510',698],['0.91415',731],['0.91320',764],['0.91225',796]],
      over: [[715,'25 Mar 2011'],[779,'25 Mar 20:00'],[843,'28 Mar 04:00'],[907,'28 Mar 12:00'],[971,'28 Mar 20:00'],[1035,'29 Mar 04:00'],[1099,'29 Mar 12:00'],[1163,'29 Mar 20:00'],[1227,'30 Mar 04:00'],[1291,'30 Mar 12:00']]
        .map(t => `<line x1="${t[0] + .5}" x2="${t[0] + .5}" y1="799" y2="803" stroke="#000"/>` + label(t[0], 813, t[1])).join('') +
        `<rect x="1372" y="566" width="38" height="12" fill="#000"/>` + label(1376, 575.5, '0.91873', '#fff')
    });
  </script>

</body>

</html>
